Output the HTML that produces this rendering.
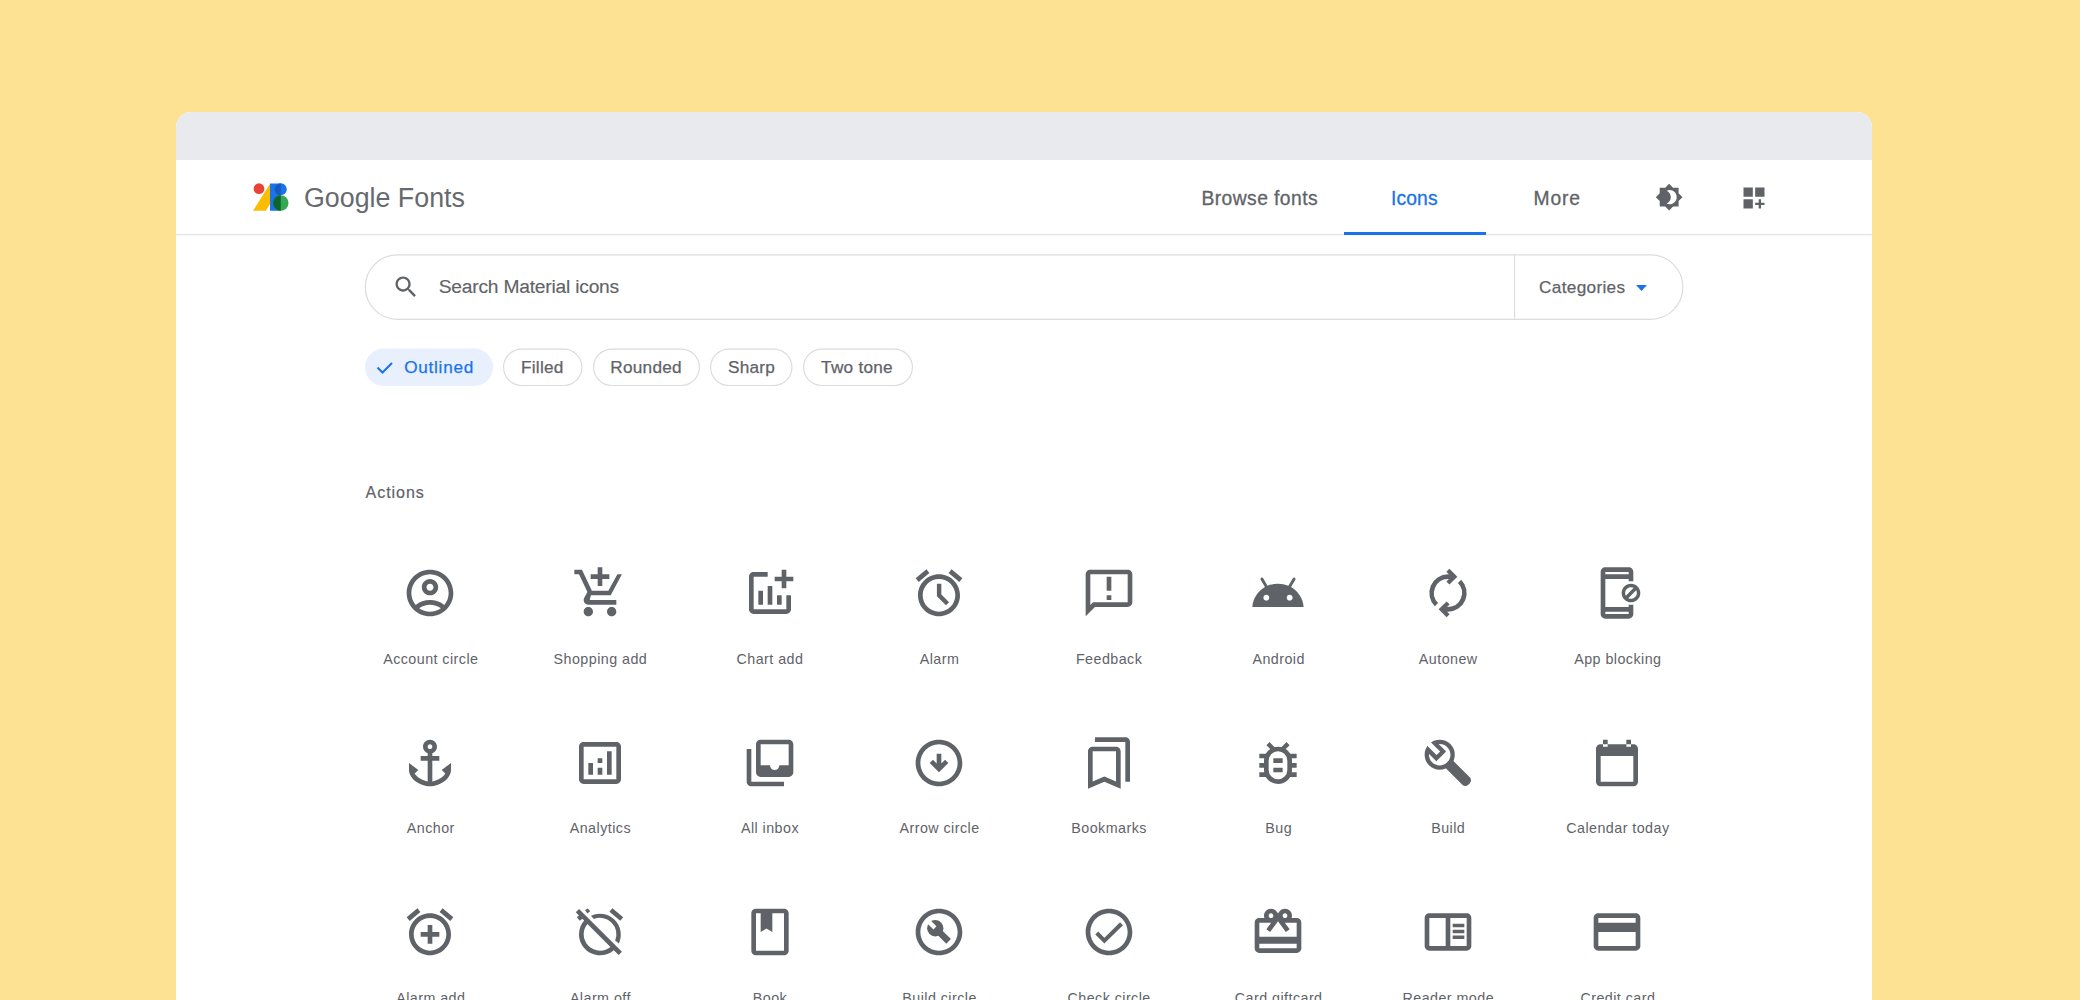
<!DOCTYPE html>
<html><head><meta charset="utf-8"><title>Google Fonts Icons</title>
<style>
html,body{margin:0;padding:0;}
body{width:2080px;height:1000px;overflow:hidden;background:#fde293;position:relative;font-family:"Liberation Sans", sans-serif;}
.a{position:absolute;box-sizing:content-box;}
.t{position:absolute;white-space:nowrap;font-family:"Liberation Sans", sans-serif;}
#win{position:absolute;left:176px;top:112px;width:1696px;height:900px;background:#fff;border-radius:15px 15px 0 0;overflow:hidden;}
#bar{position:absolute;left:0;top:0;width:1696px;height:48px;background:#e8eaed;}
#hdr{position:absolute;left:0;top:122px;width:1696px;height:1px;background:#e2e3e6;box-shadow:0 1px 1px rgba(60,64,67,0.06);}
</style></head>
<body>
<div id="win"><div id="bar"></div><div id="hdr"></div></div>
<svg class="a" style="left:250px;top:180px" width="50" height="35" viewBox="250 180 50 35">
<polygon points="253,210.75 265.75,210.75 270.2,203.7 270.2,183.5" fill="#fbbc04"/>
<rect x="270" y="183.5" width="10.75" height="27.25" fill="#1a73e8"/>
<circle cx="280.75" cy="189.25" r="6" fill="#1a73e8"/>
<path d="M280.75 183.5a6 6 0 0 0 0 12z" fill="#185abc"/>
<circle cx="280.75" cy="203" r="7.75" fill="#34a853"/>
<path d="M280.75 195.25a7.75 7.75 0 0 0 0 15.5z" fill="#0d652d"/>
<circle cx="259" cy="188.7" r="5.4" fill="#ea4335"/>
</svg>
<div class="t" style="left:304px;top:184.71px;font-size:26.8px;line-height:26.8px;color:#666a6f;letter-spacing:0px;font-weight:400;">Google Fonts</div>
<div class="t" style="left:1201.5px;top:188.51px;font-size:19.3px;line-height:19.3px;color:#5f6368;letter-spacing:0.42px;font-weight:400;-webkit-text-stroke:0.3px #5f6368;">Browse fonts</div>
<div class="t" style="left:1391px;top:188.51px;font-size:19.3px;line-height:19.3px;color:#1a73e8;letter-spacing:0.12px;font-weight:400;-webkit-text-stroke:0.3px #1a73e8;">Icons</div>
<div class="t" style="left:1533.5px;top:188.51px;font-size:19.3px;line-height:19.3px;color:#5f6368;letter-spacing:0.85px;font-weight:400;-webkit-text-stroke:0.3px #5f6368;">More</div>
<div class="a" style="left:1344px;top:232px;width:142px;height:3px;background:#1a73e8"></div>
<svg class="a" style="left:1655.35px;top:183.35px" width="28.3" height="28.3" viewBox="0 0 24 24" fill="#5f6368"><path d="M20 8.69V4h-4.69L12 .69 8.69 4H4v4.69L.69 12 4 15.31V20h4.69L12 23.31 15.31 20H20v-4.69L23.31 12 20 8.69zM12.4 18c-.89 0-1.74-.2-2.5-.55C11.96 16.5 13.4 14.42 13.4 12s-1.44-4.5-3.5-5.45C10.66 6.2 11.51 6 12.4 6c3.31 0 6 2.69 6 6s-2.69 6-6 6z"/></svg>
<svg class="a" style="left:1740.2px;top:183.9px" width="28" height="28" viewBox="0 0 24 24" fill="#5f6368"><path d="M3 3h8v8H3zm10 0h8v8h-8zM3 13h8v8H3zm15 0h-2v3h-3v2h3v3h2v-3h3v-2h-3z"/></svg>
<svg class="a" style="left:360px;top:250px" width="1330" height="75" viewBox="360 250 1330 75"><rect x="365.3" y="254.9" width="1317.6" height="64.4" rx="32.2" fill="none" stroke="#dadce0" stroke-width="1.2"/><rect x="1514" y="255" width="1.1" height="64.5" fill="#dadce0"/></svg>
<svg class="a" style="left:391.6px;top:273.2px" width="28" height="28" viewBox="0 0 24 24" fill="#5f6368"><path d="M15.5 14h-.79l-.28-.27C15.41 12.59 16 11.11 16 9.5 16 5.91 13.09 3 9.5 3S3 5.91 3 9.5 5.91 16 9.5 16c1.61 0 3.09-.59 4.23-1.57l.27.28v.79l5 4.99L20.49 19l-4.99-5zm-6 0C7.01 14 5 11.99 5 9.5S7.01 5 9.5 5 14 7.01 14 9.5 11.99 14 9.5 14z"/></svg>
<div class="t" style="left:438.7px;top:277.35px;font-size:19.2px;line-height:19.2px;color:#5f6368;letter-spacing:-0.2px;font-weight:400;-webkit-text-stroke:0.15px #5f6368;">Search Material icons</div>
<div class="t" style="left:1539px;top:278.74px;font-size:17.2px;line-height:17.2px;color:#5f6368;letter-spacing:0.33px;font-weight:400;-webkit-text-stroke:0.25px #5f6368;">Categories</div>
<svg class="a" style="left:1635px;top:284px" width="13" height="8" viewBox="0 0 13 8"><path d="M1 1h11L6.5 7z" fill="#1a73e8"/></svg>
<svg class="a" style="left:363px;top:346px" width="132" height="43" viewBox="363 346 132 43"><rect x="365" y="348.5" width="128" height="37.5" rx="18.75" fill="#e8f0fe"/></svg>
<div class="t" style="left:404.2px;top:358.84px;font-size:17.2px;line-height:17.2px;color:#1a73e8;letter-spacing:0.72px;font-weight:400;-webkit-text-stroke:0.25px #1a73e8;">Outlined</div>
<svg class="a" style="left:500.5px;top:346px" width="83.5" height="43" viewBox="500.5 346 83.5 43"><rect x="503.1" y="349.1" width="78.3" height="36.4" rx="18.2" fill="none" stroke="#dadce0" stroke-width="1.2"/></svg>
<div class="t" style="left:521px;top:358.84px;font-size:17.2px;line-height:17.2px;color:#5f6368;letter-spacing:0.25px;font-weight:400;-webkit-text-stroke:0.25px #5f6368;">Filled</div>
<svg class="a" style="left:590.5px;top:346px" width="111.0" height="43" viewBox="590.5 346 111.0 43"><rect x="593.1" y="349.1" width="105.8" height="36.4" rx="18.2" fill="none" stroke="#dadce0" stroke-width="1.2"/></svg>
<div class="t" style="left:610.3px;top:358.84px;font-size:17.2px;line-height:17.2px;color:#5f6368;letter-spacing:0.25px;font-weight:400;-webkit-text-stroke:0.25px #5f6368;">Rounded</div>
<svg class="a" style="left:708px;top:346px" width="86.5" height="43" viewBox="708 346 86.5 43"><rect x="710.6" y="349.1" width="81.3" height="36.4" rx="18.2" fill="none" stroke="#dadce0" stroke-width="1.2"/></svg>
<div class="t" style="left:728px;top:358.84px;font-size:17.2px;line-height:17.2px;color:#5f6368;letter-spacing:0.25px;font-weight:400;-webkit-text-stroke:0.25px #5f6368;">Sharp</div>
<svg class="a" style="left:801px;top:346px" width="114" height="43" viewBox="801 346 114 43"><rect x="803.6" y="349.1" width="108.8" height="36.4" rx="18.2" fill="none" stroke="#dadce0" stroke-width="1.2"/></svg>
<div class="t" style="left:821.1px;top:358.84px;font-size:17.2px;line-height:17.2px;color:#5f6368;letter-spacing:0.25px;font-weight:400;-webkit-text-stroke:0.25px #5f6368;">Two tone</div>
<svg class="a" style="left:375px;top:359px" width="20" height="17" viewBox="0 0 20 17"><path d="M2.5 8.5l5 5L17 4" fill="none" stroke="#1a73e8" stroke-width="2"/></svg>
<div class="t" style="left:365.5px;top:485.36px;font-size:16px;line-height:16px;color:#5f6368;letter-spacing:0.98px;font-weight:400;-webkit-text-stroke:0.2px #5f6368;">Actions</div>
<svg class="a" style="left:402.40px;top:565.00px" width="56" height="56" viewBox="0 0 24 24" fill="#5f6368"><path fill-rule="nonzero" d="M12 2C6.48 2 2 6.48 2 12s4.48 10 10 10 10-4.48 10-10S17.52 2 12 2zM7.35 18.5C8.66 17.56 10.26 17 12 17s3.34.56 4.65 1.5c-1.31.94-2.91 1.5-4.65 1.5s-3.34-.56-4.65-1.5zm10.79-1.38C16.45 15.8 14.32 15 12 15s-4.45.8-6.14 2.12C4.7 15.73 4 13.95 4 12c0-4.42 3.58-8 8-8s8 3.58 8 8c0 1.95-.7 3.73-1.86 5.12zM12 6c-1.93 0-3.5 1.57-3.5 3.5S10.07 13 12 13s3.5-1.57 3.5-3.5S13.93 6 12 6zm0 5c-.83 0-1.5-.67-1.5-1.5S11.17 8 12 8s1.5.67 1.5 1.5S12.83 11 12 11z"/></svg>
<div class="t" style="left:350.8px;top:651.70px;font-size:14.3px;line-height:14.3px;color:#5f6368;letter-spacing:0.45px;font-weight:400;width:160px;text-align:center;">Account circle</div>
<svg class="a" style="left:571.98px;top:565.00px" width="56" height="56" viewBox="0 0 24 24" fill="#5f6368"><path fill-rule="nonzero" d="M11 9h2V6h3V4h-3V1h-2v3H8v2h3v3zm-4 9c-1.1 0-1.99.9-1.99 2S5.9 22 7 22s2-.9 2-2-.9-2-2-2zm10 0c-1.1 0-1.99.9-1.99 2s.89 2 1.99 2 2-.9 2-2-.9-2-2-2zM8.1 13h8.5L21.4 4h-1.95l-3.87 7H8.53L4.27 2H1v2h2l3.6 7.59-1.35 2.44C4.52 15.37 5.48 17 7 17h12v-2H7.6z"/></svg>
<div class="t" style="left:520.38px;top:651.70px;font-size:14.3px;line-height:14.3px;color:#5f6368;letter-spacing:0.45px;font-weight:400;width:160px;text-align:center;">Shopping add</div>
<svg class="a" style="left:741.56px;top:565.00px" width="56" height="56" viewBox="0 0 24 24" fill="#5f6368"><path fill-rule="nonzero" d="M22 5v2h-3v3h-2V7h-3V5h3V2h2v3h3zm-3 14H5V5h6V3H5c-1.1 0-2 .9-2 2v14c0 1.1.9 2 2 2h14c1.1 0 2-.9 2-2v-6h-2v6zm-4-6v4h2v-4h-2zm-4 4h2V9h-2v8zm-2 0v-6H7v6h2z"/></svg>
<div class="t" style="left:689.96px;top:651.70px;font-size:14.3px;line-height:14.3px;color:#5f6368;letter-spacing:0.45px;font-weight:400;width:160px;text-align:center;">Chart add</div>
<svg class="a" style="left:911.14px;top:565.00px" width="56" height="56" viewBox="0 0 24 24" fill="#5f6368"><path fill-rule="nonzero" d="M22 5.72l-4.6-3.86-1.29 1.53 4.6 3.86zM7.88 3.39L6.6 1.86 2 5.71l1.29 1.53zM12 4c-4.97 0-9 4.03-9 9s4.02 9 9 9c4.97 0 9-4.03 9-9s-4.03-9-9-9zm0 16c-3.87 0-7-3.13-7-7s3.13-7 7-7 7 3.13 7 7-3.13 7-7 7z"/><path fill="none" stroke="#5f6368" stroke-width="1.9" stroke-linecap="butt" stroke-linejoin="miter" d="M12.05 8v5l3.6 3.6"/></svg>
<div class="t" style="left:859.54px;top:651.70px;font-size:14.3px;line-height:14.3px;color:#5f6368;letter-spacing:0.45px;font-weight:400;width:160px;text-align:center;">Alarm</div>
<svg class="a" style="left:1080.72px;top:565.00px" width="56" height="56" viewBox="0 0 24 24" fill="#5f6368"><path fill-rule="nonzero" d="M20 2H4c-1.1 0-2 .9-2 2v18l4-4h14c1.1 0 2-.9 2-2V4c0-1.1-.9-2-2-2zm0 14H5.17L4 17.17V4h16v12zM11 5h2v6h-2zM11 13h2v2h-2z"/></svg>
<div class="t" style="left:1029.12px;top:651.70px;font-size:14.3px;line-height:14.3px;color:#5f6368;letter-spacing:0.45px;font-weight:400;width:160px;text-align:center;">Feedback</div>
<svg class="a" style="left:1250.30px;top:565.00px" width="56" height="56" viewBox="0 0 24 24" fill="#5f6368"><path fill-rule="nonzero" d="M17.6 9.48l1.84-3.18c.16-.31.04-.69-.26-.85-.29-.15-.65-.06-.83.22l-1.88 3.24c-2.86-1.21-6.08-1.21-8.94 0L5.65 5.67c-.19-.29-.58-.38-.87-.2-.28.18-.37.54-.22.83L6.4 9.48C3.3 11.25 1.28 14.44 1 18h22c-.28-3.56-2.3-6.75-5.4-8.52zM7 15.25c-.69 0-1.25-.56-1.25-1.25S6.31 12.75 7 12.75s1.25.56 1.25 1.25-.56 1.25-1.25 1.25zm10 0c-.69 0-1.25-.56-1.25-1.25s.56-1.25 1.25-1.25 1.25.56 1.25 1.25-.56 1.25-1.25 1.25z"/></svg>
<div class="t" style="left:1198.7px;top:651.70px;font-size:14.3px;line-height:14.3px;color:#5f6368;letter-spacing:0.45px;font-weight:400;width:160px;text-align:center;">Android</div>
<svg class="a" style="left:1419.88px;top:565.00px" width="56" height="56" viewBox="0 0 24 24" fill="#5f6368"><path fill-rule="nonzero" d="M12.6 1.6L16 5l-3.4 3.4-1.3-1.3L13.4 5l-2.1-2.1z M11.4 22.4L8 19l3.4-3.4 1.3 1.3L10.6 19l2.1 2.1z"/><path fill="none" stroke="#5f6368" stroke-width="2" stroke-linecap="butt" stroke-linejoin="miter" d="M13.6 5H12A7 7 0 0 0 7.05 16.95"/><path fill="none" stroke="#5f6368" stroke-width="2" stroke-linecap="butt" stroke-linejoin="miter" d="M10.4 19H12A7 7 0 0 0 16.95 7.05"/></svg>
<div class="t" style="left:1368.28px;top:651.70px;font-size:14.3px;line-height:14.3px;color:#5f6368;letter-spacing:0.45px;font-weight:400;width:160px;text-align:center;">Autonew</div>
<svg class="a" style="left:1589.46px;top:565.00px" width="56" height="56" viewBox="0 0 24 24" fill="#5f6368"><path fill-rule="nonzero" d="M18 8c-2.21 0-4 1.79-4 4s1.79 4 4 4 4-1.79 4-4-1.79-4-4-4zm-2.5 4c0-1.38 1.12-2.5 2.5-2.5.42 0 .8.11 1.15.29l-3.36 3.36c-.18-.35-.29-.73-.29-1.15zm2.5 2.5c-.42 0-.8-.11-1.15-.29l3.36-3.36c.18.35.29.73.29 1.15 0 1.38-1.12 2.5-2.5 2.5zM17 18H7V6h10v1h2V3c0-1.1-.9-2-2-2H7c-1.1 0-2 .9-2 2v18c0 1.1.9 2 2 2h10c1.1 0 2-.9 2-2v-4h-2v1zM7 3h10v1H7V3zm10 18H7v-1h10v1z"/></svg>
<div class="t" style="left:1537.86px;top:651.70px;font-size:14.3px;line-height:14.3px;color:#5f6368;letter-spacing:0.45px;font-weight:400;width:160px;text-align:center;">App blocking</div>
<svg class="a" style="left:402.40px;top:735.00px" width="56" height="56" viewBox="0 0 24 24" fill="#5f6368"><path fill-rule="nonzero" d="M13,9V7.82C14.16,7.4,15,6.3,15,5c0-1.65-1.35-3-3-3S9,3.35,9,5c0,1.3,0.84,2.4,2,2.82V9H8v2h3v8.92c-2.22-0.33-4.59-1.68-5.55-3.37L7,15l-4-3v3c0,3.88,4.92,7,9,7s9-3.12,9-7v-3l-4,3l1.55,1.55c-0.96,1.69-3.33,3.04-5.55,3.37V11h3V9H13z M12,4c0.55,0,1,0.45,1,1s-0.45,1-1,1s-1-0.45-1-1S11.45,4,12,4z"/></svg>
<div class="t" style="left:350.8px;top:821.40px;font-size:14.3px;line-height:14.3px;color:#5f6368;letter-spacing:0.45px;font-weight:400;width:160px;text-align:center;">Anchor</div>
<svg class="a" style="left:571.98px;top:735.00px" width="56" height="56" viewBox="0 0 24 24" fill="#5f6368"><path fill-rule="nonzero" d="M19 3H5c-1.1 0-2 .9-2 2v14c0 1.1.9 2 2 2h14c1.1 0 2-.9 2-2V5c0-1.1-.9-2-2-2zm0 16H5V5h14v14zM7 12h2v5H7zm8-5h2v10h-2zm-4 7h2v3h-2zm0-4h2v2h-2z"/></svg>
<div class="t" style="left:520.38px;top:821.40px;font-size:14.3px;line-height:14.3px;color:#5f6368;letter-spacing:0.45px;font-weight:400;width:160px;text-align:center;">Analytics</div>
<svg class="a" style="left:741.56px;top:735.00px" width="56" height="56" viewBox="0 0 24 24" fill="#5f6368"><path fill-rule="evenodd" d="M20 2H8c-1.1 0-2 .9-2 2v12c0 1.1.9 2 2 2h12c1.1 0 2-.9 2-2V4c0-1.1-.9-2-2-2zM8 4h12v9h-4a2 2 0 0 1-4 0H8z M4 6H2v14c0 1.1.9 2 2 2h14v-2H4z"/></svg>
<div class="t" style="left:689.96px;top:821.40px;font-size:14.3px;line-height:14.3px;color:#5f6368;letter-spacing:0.45px;font-weight:400;width:160px;text-align:center;">All inbox</div>
<svg class="a" style="left:911.14px;top:735.00px" width="56" height="56" viewBox="0 0 24 24" fill="#5f6368"><path fill-rule="nonzero" d="M12 2C6.48 2 2 6.48 2 12s4.48 10 10 10 10-4.48 10-10S17.52 2 12 2zm0 18c-4.42 0-8-3.58-8-8s3.58-8 8-8 8 3.58 8 8-3.58 8-8 8z M12 16l4-4-1.4-1.4-1.6 1.6V8h-2v4.2l-1.6-1.6L8 12z"/></svg>
<div class="t" style="left:859.54px;top:821.40px;font-size:14.3px;line-height:14.3px;color:#5f6368;letter-spacing:0.45px;font-weight:400;width:160px;text-align:center;">Arrow circle</div>
<svg class="a" style="left:1080.72px;top:735.00px" width="56" height="56" viewBox="0 0 24 24" fill="#5f6368"><path fill-rule="nonzero" d="M15 7v12.97l-4.21-1.81-.79-.34-.79.34L5 19.97V7h10m0-2H5c-1.1 0-2 .9-2 2v16l7-3 7 3V7c0-1.1-.9-2-2-2z M6 1h13c1.1 0 2 .9 2 2v17h-2V3H6z"/></svg>
<div class="t" style="left:1029.12px;top:821.40px;font-size:14.3px;line-height:14.3px;color:#5f6368;letter-spacing:0.45px;font-weight:400;width:160px;text-align:center;">Bookmarks</div>
<svg class="a" style="left:1250.30px;top:735.00px" width="56" height="56" viewBox="0 0 24 24" fill="#5f6368"><path fill="none" stroke="#5f6368" stroke-width="2" stroke-linecap="butt" stroke-linejoin="miter" d="M12 6a5 5 0 0 1 5 5v4a5 5 0 0 1-10 0v-4a5 5 0 0 1 5-5z"/><path fill-rule="nonzero" d="M4 8h3v2H4zM4 12h3v2H4zM4 16h3v2H4zM17 8h3v2h-3zM17 12h3v2h-3zM17 16h3v2h-3zM10 10h4v2h-4zM10 14h4v2h-4z"/><path fill="none" stroke="#5f6368" stroke-width="1.9" stroke-linecap="butt" stroke-linejoin="miter" d="M7.7 3.7L10.3 6.3M16.3 3.7L13.7 6.3"/></svg>
<div class="t" style="left:1198.7px;top:821.40px;font-size:14.3px;line-height:14.3px;color:#5f6368;letter-spacing:0.45px;font-weight:400;width:160px;text-align:center;">Bug</div>
<svg class="a" style="left:1419.88px;top:735.00px" width="56" height="56" viewBox="0 0 24 24" fill="#5f6368"><defs><mask id="bm"><rect width="24" height="24" fill="#fff"/><circle cx="8.45" cy="8.45" r="4.6" fill="#000"/><path d="M11.2 7.1L7 11.3 1 5.3 5.2 1.1z" fill="#fff"/><path d="M8.62 7.11L7.08 8.57 1.5 3 3 1.5z" fill="#000"/></mask></defs><circle cx="8.45" cy="8.45" r="6.45" mask="url(#bm)"/><path transform="translate(8.45 8.45) rotate(45)" d="M4.6 -2.25H15.95a1.8 1.8 0 0 1 1.8 1.8v0.9a1.8 1.8 0 0 1-1.8 1.8H4.6z"/></svg>
<div class="t" style="left:1368.28px;top:821.40px;font-size:14.3px;line-height:14.3px;color:#5f6368;letter-spacing:0.45px;font-weight:400;width:160px;text-align:center;">Build</div>
<svg class="a" style="left:1589.46px;top:735.00px" width="56" height="56" viewBox="0 0 24 24" fill="#5f6368"><path fill-rule="nonzero" d="M19 4H5c-1.1 0-2 .9-2 2v14c0 1.1.9 2 2 2h14c1.1 0 2-.9 2-2V6c0-1.1-.9-2-2-2zm0 16H5V9h14z M6 2h2v3H6zM16 2h2v3h-2z"/></svg>
<div class="t" style="left:1537.86px;top:821.40px;font-size:14.3px;line-height:14.3px;color:#5f6368;letter-spacing:0.45px;font-weight:400;width:160px;text-align:center;">Calendar today</div>
<svg class="a" style="left:402.40px;top:904.10px" width="56" height="56" viewBox="0 0 24 24" fill="#5f6368"><path fill-rule="nonzero" d="M22 5.72l-4.6-3.86-1.29 1.53 4.6 3.86zM7.88 3.39L6.6 1.86 2 5.71l1.29 1.53zM12 4c-4.97 0-9 4.03-9 9s4.02 9 9 9c4.97 0 9-4.03 9-9s-4.03-9-9-9zm0 16c-3.87 0-7-3.13-7-7s3.13-7 7-7 7 3.13 7 7-3.13 7-7 7zM13 9h-2v3H8v2h3v3h2v-3h3v-2h-3z"/></svg>
<div class="t" style="left:350.8px;top:991.10px;font-size:14.3px;line-height:14.3px;color:#5f6368;letter-spacing:0.45px;font-weight:400;width:160px;text-align:center;">Alarm add</div>
<svg class="a" style="left:571.98px;top:904.10px" width="56" height="56" viewBox="0 0 24 24" fill="#5f6368"><path fill-rule="nonzero" d="M9.4 6.45A7 7 0 0 1 18.5 15.6L20.1 16.9A9 9 0 0 0 8.1 5zM17.337 1.81l4.607 3.845-1.28 1.535-4.61-3.843zM3.02 2.1L1.61 3.51l1.37 1.37-.92.77 1.28 1.54 1.06-.88.8.8C3.83 8.69 3 10.75 3 13c0 4.97 4.03 9 9 9 2.25 0 4.31-.83 5.89-2.2l2.1 2.1 1.41-1.41L3.02 2.1zM12 20c-3.86 0-7-3.14-7-7 0-1.7.61-3.26 1.62-4.47l9.85 9.85C15.26 19.39 13.7 20 12 20zM5.6 2.6L6.75 1.95 7.8 3.15 6.6 4.05z"/></svg>
<div class="t" style="left:520.38px;top:991.10px;font-size:14.3px;line-height:14.3px;color:#5f6368;letter-spacing:0.45px;font-weight:400;width:160px;text-align:center;">Alarm off</div>
<svg class="a" style="left:741.56px;top:904.10px" width="56" height="56" viewBox="0 0 24 24" fill="#5f6368"><path fill-rule="nonzero" d="M18 2H6c-1.1 0-2 .9-2 2v16c0 1.1.9 2 2 2h12c1.1 0 2-.9 2-2V4c0-1.1-.9-2-2-2zm0 18H6V4h2v8l2.5-1.5L13 12V4h5z"/></svg>
<div class="t" style="left:689.96px;top:991.10px;font-size:14.3px;line-height:14.3px;color:#5f6368;letter-spacing:0.45px;font-weight:400;width:160px;text-align:center;">Book</div>
<svg class="a" style="left:911.14px;top:904.10px" width="56" height="56" viewBox="0 0 24 24" fill="#5f6368"><path fill-rule="nonzero" d="M12 2C6.48 2 2 6.48 2 12s4.48 10 10 10 10-4.48 10-10S17.52 2 12 2zm0 18c-4.42 0-8-3.58-8-8s3.58-8 8-8 8 3.58 8 8-3.58 8-8 8z"/><defs><mask id="bcm"><rect width="24" height="24" fill="#fff"/><path d="M10.91 9.56L9.63 10.97 5 6.4 6.4 5z" fill="#000"/></mask></defs><circle cx="10.4" cy="10.4" r="3.5" mask="url(#bcm)"/><path fill-rule="nonzero" d="M13.2 11.1L17.1 15 15.1 17 11.2 13.1z"/></svg>
<div class="t" style="left:859.54px;top:991.10px;font-size:14.3px;line-height:14.3px;color:#5f6368;letter-spacing:0.45px;font-weight:400;width:160px;text-align:center;">Build circle</div>
<svg class="a" style="left:1080.72px;top:904.10px" width="56" height="56" viewBox="0 0 24 24" fill="#5f6368"><path fill-rule="nonzero" d="M12 2C6.48 2 2 6.48 2 12s4.48 10 10 10 10-4.48 10-10S17.52 2 12 2zm0 18c-4.42 0-8-3.58-8-8s3.58-8 8-8 8 3.58 8 8-3.58 8-8 8z"/><path fill="none" stroke="#5f6368" stroke-width="1.75" stroke-linecap="butt" stroke-linejoin="miter" d="M6.75 12.45L10.02 15.7 17.35 8.45"/></svg>
<div class="t" style="left:1029.12px;top:991.10px;font-size:14.3px;line-height:14.3px;color:#5f6368;letter-spacing:0.45px;font-weight:400;width:160px;text-align:center;">Check circle</div>
<svg class="a" style="left:1250.30px;top:904.10px" width="56" height="56" viewBox="0 0 24 24" fill="#5f6368"><path fill-rule="nonzero" d="M20 6h-2.18c.11-.31.18-.65.18-1 0-1.66-1.34-3-3-3-1.05 0-1.96.54-2.5 1.35l-.5.67-.5-.68C10.96 2.54 10.05 2 9 2 7.34 2 6 3.34 6 5c0 .35.07.69.18 1H4c-1.11 0-1.99.89-1.99 2L2 19c0 1.11.89 2 2 2h16c1.11 0 2-.89 2-2V8c0-1.11-.89-2-2-2zm-5-2c.55 0 1 .45 1 1s-.45 1-1 1-1-.45-1-1 .45-1 1-1zM9 4c.55 0 1 .45 1 1s-.45 1-1 1-1-.45-1-1 .45-1 1-1zm11 15H4v-2h16v2zm0-5H4V8h5.08L7 10.83 8.62 12 11 8.76l1-1.36 1 1.36L15.38 12 17 10.83 14.92 8H20v6z"/></svg>
<div class="t" style="left:1198.7px;top:991.10px;font-size:14.3px;line-height:14.3px;color:#5f6368;letter-spacing:0.45px;font-weight:400;width:160px;text-align:center;">Card giftcard</div>
<svg class="a" style="left:1419.88px;top:904.10px" width="56" height="56" viewBox="0 0 24 24" fill="#5f6368"><path fill-rule="evenodd" d="M20 4H4c-1.1 0-2 .9-2 2v12c0 1.1.9 2 2 2h16c1.1 0 2-.9 2-2V6c0-1.1-.9-2-2-2zM4 6h7v12H4zm9 0h7v12h-7z M14 8.5h5V10h-5zm0 2.5h5v1.5h-5zm0 2.5h5V15h-5z"/></svg>
<div class="t" style="left:1368.28px;top:991.10px;font-size:14.3px;line-height:14.3px;color:#5f6368;letter-spacing:0.45px;font-weight:400;width:160px;text-align:center;">Reader mode</div>
<svg class="a" style="left:1589.46px;top:904.10px" width="56" height="56" viewBox="0 0 24 24" fill="#5f6368"><path fill-rule="nonzero" d="M20 4H4c-1.11 0-1.99.89-1.99 2L2 18c0 1.11.89 2 2 2h16c1.11 0 2-.89 2-2V6c0-1.11-.89-2-2-2zm0 14H4v-6h16v6zm0-10H4V6h16v2z"/></svg>
<div class="t" style="left:1537.86px;top:991.10px;font-size:14.3px;line-height:14.3px;color:#5f6368;letter-spacing:0.45px;font-weight:400;width:160px;text-align:center;">Credit card</div>

</body></html>
